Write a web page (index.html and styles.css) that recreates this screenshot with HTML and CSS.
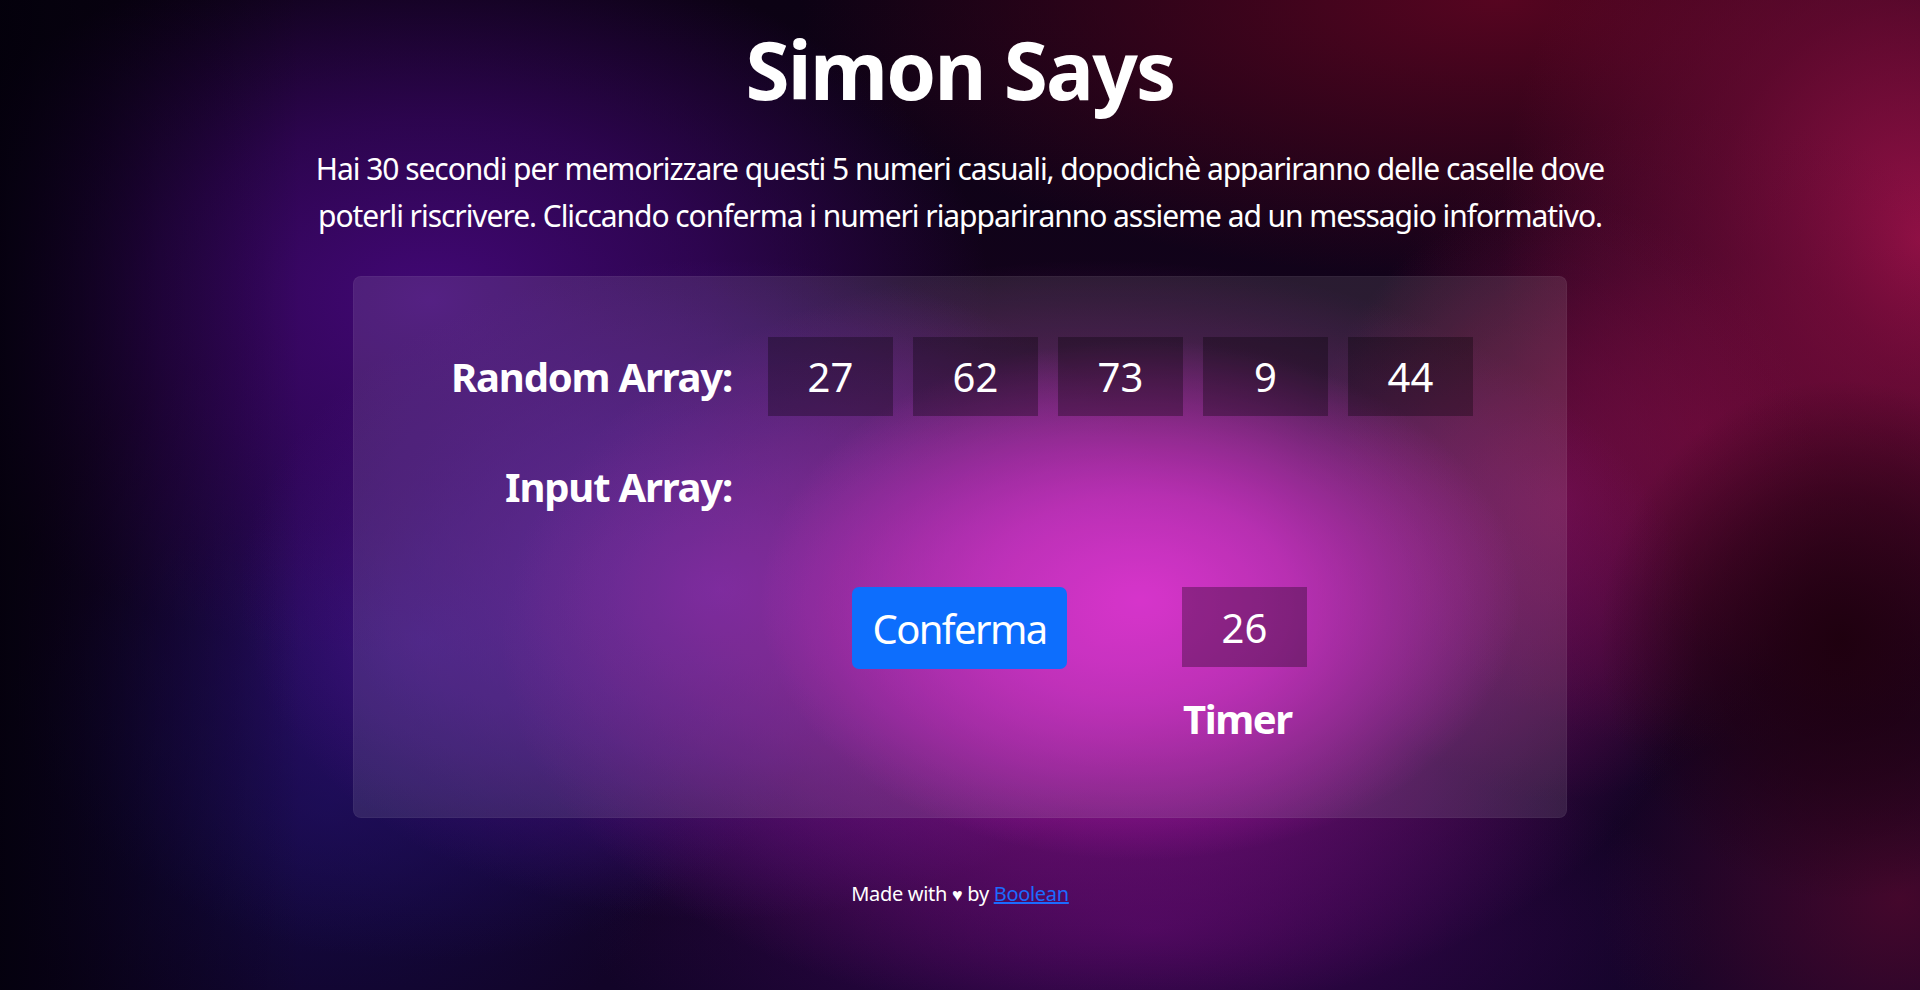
FILE: index.html
```html
<!DOCTYPE html>
<html lang="it">
<head>
<meta charset="utf-8">
<title>Simon Says</title>
<link rel="stylesheet" href="styles.css">
</head>
<body>
<main class="page">
  <header class="intro">
    <h1 class="title">Simon Says</h1>
    <p class="lead">Hai 30 secondi per memorizzare questi 5 numeri casuali, dopodichè appariranno delle caselle dove<br>poterli riscrivere. Cliccando conferma i numeri riappariranno assieme ad un messagio informativo.</p>
  </header>

  <section class="game">
    <div class="game-row">
      <h2 class="row-label">Random Array:</h2>
      <ul class="cells">
        <li class="cell">27</li>
        <li class="cell">62</li>
        <li class="cell">73</li>
        <li class="cell">9</li>
        <li class="cell">44</li>
      </ul>
    </div>
    <div class="game-row">
      <h2 class="row-label">Input Array:</h2>
    </div>
    <div class="actions">
      <button class="btn-confirm" type="button">Conferma</button>
      <div class="timer">
        <div class="cell cell--timer">26</div>
        <h3 class="timer-label">Timer</h3>
      </div>
    </div>
  </section>

  <footer class="credits">Made with <span class="heart">♥</span> by <a class="credits-link" href="#">Boolean</a></footer>
</main>
</body>
</html>
```

FILE: styles.css
```css
html, body {
  margin: 0;
  padding: 0;
}

body {
  min-height: 990px;
  color: #fff;
  font-family: "Noto Sans", "Open Sans", sans-serif;
  letter-spacing: -0.028em;
  background-color: #14031f;
  background-image:
    linear-gradient(90deg, rgba(2, 0, 10, 0.85) 0px, rgba(2, 0, 10, 0.35) 160px, rgba(2, 0, 10, 0) 300px),
    radial-gradient(ellipse 240px 260px at 1840px 640px, rgba(30, 0, 14, 0.95) 0%, rgba(30, 0, 14, 0.5) 55%, rgba(30, 0, 14, 0) 100%),
    radial-gradient(ellipse 380px 260px at 1140px 600px, rgba(214, 30, 200, 0.95) 0%, rgba(200, 28, 190, 0.75) 40%, rgba(170, 22, 165, 0) 100%),
    radial-gradient(ellipse 600px 380px at 1100px 640px, rgba(175, 24, 170, 0.85) 0%, rgba(150, 20, 150, 0.55) 45%, rgba(120, 12, 120, 0) 100%),
    radial-gradient(ellipse 260px 300px at 1560px 500px, rgba(130, 16, 80, 0.6) 0%, rgba(120, 14, 70, 0.3) 55%, rgba(120, 14, 70, 0) 100%),
    radial-gradient(ellipse 480px 330px at 720px 590px, rgba(95, 22, 150, 0.95) 0%, rgba(80, 18, 140, 0.6) 50%, rgba(70, 14, 125, 0) 100%),
    radial-gradient(ellipse 560px 360px at 430px 300px, rgba(68, 8, 122, 0.95) 0%, rgba(60, 6, 108, 0.65) 50%, rgba(50, 4, 90, 0) 100%),
    radial-gradient(ellipse 420px 320px at 420px 640px, rgba(48, 16, 118, 0.9) 0%, rgba(35, 12, 95, 0.55) 55%, rgba(30, 10, 80, 0) 100%),
    radial-gradient(ellipse 360px 280px at 330px 800px, rgba(22, 14, 80, 0.9) 0%, rgba(18, 10, 70, 0.5) 55%, rgba(18, 10, 70, 0) 100%),
    radial-gradient(ellipse 360px 320px at 1700px 430px, rgba(115, 10, 58, 0.7) 0%, rgba(100, 8, 50, 0.38) 55%, rgba(100, 8, 50, 0) 100%),
    radial-gradient(ellipse 420px 480px at 1920px 240px, rgba(160, 18, 75, 0.92) 0%, rgba(120, 12, 57, 0.6) 50%, rgba(100, 8, 45, 0) 100%),
    radial-gradient(ellipse 700px 280px at 1500px 0px, rgba(90, 5, 33, 0.95) 0%, rgba(80, 4, 30, 0.5) 55%, rgba(80, 4, 30, 0) 100%),
    radial-gradient(ellipse 560px 200px at 1150px 930px, rgba(70, 6, 90, 0.8) 0%, rgba(60, 6, 85, 0.4) 55%, rgba(60, 6, 85, 0) 100%),
    radial-gradient(ellipse 300px 260px at 1900px 900px, rgba(80, 8, 45, 0.8) 0%, rgba(80, 8, 45, 0) 100%),
    linear-gradient(180deg, #0c0214 0%, #16031f 50%, #120428 100%);
  background-repeat: no-repeat;
}

.page {
  display: flex;
  flex-direction: column;
  align-items: center;
  padding-top: 21px;
}

.intro {
  display: flex;
  flex-direction: column;
  align-items: center;
  text-align: center;
}

.title {
  margin: 0;
  font-size: 80px;
  line-height: 96px;
  font-weight: 700;
  letter-spacing: -0.022em;
}

.lead {
  margin: 28px 0 0;
  font-size: 30px;
  line-height: 47px;
  font-weight: 400;
  letter-spacing: -0.035em;
  white-space: nowrap;
}

.game {
  box-sizing: border-box;
  width: 1214px;
  margin-top: 37px;
  padding: 61px 0 75px;
  border-radius: 8px;
  background: rgba(255, 255, 255, 0.1);
  box-shadow: inset 0 0 0 1px rgba(255, 255, 255, 0.04);
}

.game-row {
  display: flex;
  align-items: center;
  min-height: 79px;
}

.game-row + .game-row {
  margin-top: 31px;
}

.row-label {
  box-sizing: border-box;
  width: 379px;
  margin: 0 36px 0 0;
  text-align: right;
  font-size: 40px;
  line-height: 48px;
  font-weight: 700;
  letter-spacing: -0.03em;
}

.cells {
  display: flex;
  gap: 20px;
  list-style: none;
  margin: 0;
  padding: 0;
}

.cell {
  display: flex;
  align-items: center;
  justify-content: center;
  width: 125px;
  height: 79px;
  background: rgba(0, 0, 0, 0.3);
  font-size: 40px;
  letter-spacing: 0;
}

.actions {
  display: flex;
  align-items: flex-start;
  gap: 115px;
  margin-top: 61px;
  padding-left: 499px;
}

.btn-confirm {
  width: 215px;
  height: 82px;
  padding: 0;
  border: none;
  border-radius: 7px;
  background: #0d6efd;
  color: #fff;
  font-family: inherit;
  font-size: 40px;
  letter-spacing: -0.04em;
  cursor: pointer;
}

.timer {
  display: flex;
  flex-direction: column;
  align-items: flex-start;
}

.cell--timer {
  height: 80px;
}

.timer-label {
  margin: 28px 0 0 1px;
  font-size: 40px;
  line-height: 48px;
  font-weight: 700;
  letter-spacing: -0.035em;
}

.credits {
  margin-top: 61px;
  font-size: 20px;
  line-height: 30px;
  letter-spacing: -0.015em;
}

.heart {
  font-size: 18px;
}

.credits-link {
  color: #1c6bff;
  text-decoration: underline;
}
```
